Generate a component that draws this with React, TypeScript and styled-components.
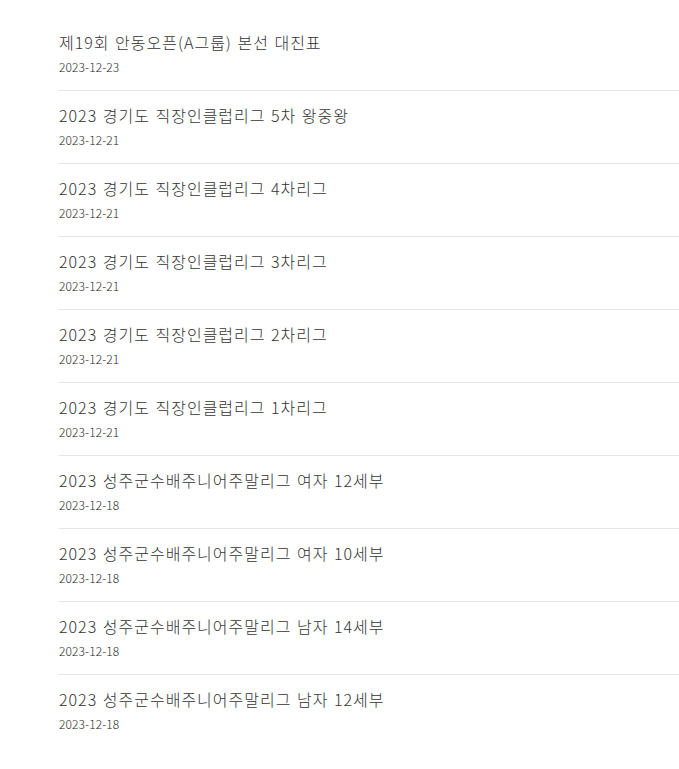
import React from "react";
import styled, { createGlobalStyle } from "styled-components";

const Global = createGlobalStyle`
  html, body { margin: 0; padding: 0; background: #fff; }
  body { font-family: "Noto Sans CJK KR", "Noto Sans", sans-serif; }
`;

const List = styled.ul`
  list-style: none;
  margin: 0;
  padding: 18px 0 0 59px;
`;

const Item = styled.li`
  padding: 12px 0 14px;
  border-bottom: 1px solid #e6e6e6;
  &:last-child { border-bottom: none; }
`;

const Title = styled.div`
  font-size: 16px;
  font-weight: 300;
  line-height: 24px;
  color: #333;
  letter-spacing: 1px;
  word-spacing: 1px;
`;

const DateText = styled.div`
  margin-top: 4px;
  font-size: 12px;
  font-weight: 300;
  line-height: 18px;
  color: #1f1f1f;
  letter-spacing: 0.1px;
`;

const items = [
  ["제19회 안동오픈(A그룹) 본선 대진표", "2023-12-23"],
  ["2023 경기도 직장인클럽리그 5차 왕중왕", "2023-12-21"],
  ["2023 경기도 직장인클럽리그 4차리그", "2023-12-21"],
  ["2023 경기도 직장인클럽리그 3차리그", "2023-12-21"],
  ["2023 경기도 직장인클럽리그 2차리그", "2023-12-21"],
  ["2023 경기도 직장인클럽리그 1차리그", "2023-12-21"],
  ["2023 성주군수배주니어주말리그 여자 12세부", "2023-12-18"],
  ["2023 성주군수배주니어주말리그 여자 10세부", "2023-12-18"],
  ["2023 성주군수배주니어주말리그 남자 14세부", "2023-12-18"],
  ["2023 성주군수배주니어주말리그 남자 12세부", "2023-12-18"],
];

export default function App() {
  return (
    <>
      <Global />
      <List>
        {items.map(([t, d], i) => (
          <Item key={i}>
            <Title>{t}</Title>
            <DateText>{d}</DateText>
          </Item>
        ))}
      </List>
    </>
  );
}
